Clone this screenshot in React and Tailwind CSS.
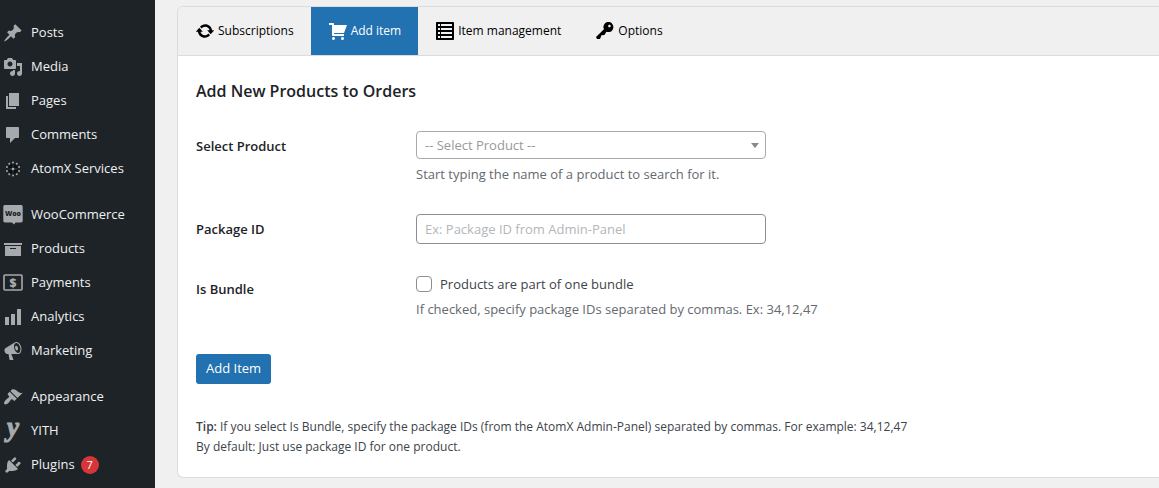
import React, { useState } from "react";

// WordPress dashicons, 20x20 grid
const icons = {
  post: "M10.44 3.02l1.82-1.82 6.36 6.35-1.83 1.82c-1.05-.68-2.48-.57-3.41.36l-.75.75c-.92.93-1.04 2.35-.35 3.41l-1.83 1.82-2.41-2.41-2.8 2.79c-.42.42-3.38 2.71-3.8 2.29s1.86-3.39 2.28-3.81l2.79-2.79L4.1 9.36l1.83-1.82c1.05.69 2.48.57 3.4-.36l.75-.75c.93-.92 1.05-2.35.36-3.41z",
  media: "M13 11V4c0-.55-.45-1-1-1h-1.67L9 1H5L3.67 3H2c-.55 0-1 .45-1 1v7c0 .55.45 1 1 1h10c.55 0 1-.45 1-1zM7 4.5c1.38 0 2.5 1.12 2.5 2.5S8.38 9.5 7 9.5 4.5 8.38 4.5 7 5.62 4.5 7 4.5zM14 6h5v10.5c0 1.38-1.12 2.5-2.5 2.5S14 17.88 14 16.5s1.12-2.5 2.5-2.5c.17 0 .34.02.5.05V9h-3V6zm-4 8.05V13h2v3.5c0 1.38-1.12 2.5-2.5 2.5S7 17.88 7 16.5 8.12 14 9.5 14c.17 0 .34.02.5.05z",
  page: "M6 15V2h10v13H6zm-1 1h8v2H3V5h2v11z",
  comments: "M4 2h11c.55 0 1 .45 1 1v9c0 .55-.45 1-1 1h-3l-5 5v-5H4c-.55 0-1-.45-1-1V3c0-.55.45-1 1-1z",
  archive: "M19 4v2H1V4h18zM2 7h16v10H2V7zm11 3V9H7v1h6z",
  chart: "M18 18V2h-4v16h4zm-6 0V7H8v11h4zm-6 0v-8H2v8h4z",
  megaphone: "M18.15 5.94c.46 1.62.38 3.22-.02 4.48-.42 1.28-1.26 2.18-2.3 2.48-.16.06-.26.06-.4.06-.06.02-.12.02-.18.02-.06.02-.14.02-.22.02h-6.8l2.22 5.5c.02.14-.06.26-.14.34-.08.1-.24.16-.34.16H6.95c-.1 0-.26-.06-.34-.16-.08-.08-.16-.2-.14-.34l-1-5.5H4.25l-.02-.02c-.5.06-1.08-.18-1.54-.62s-.88-1.08-1.06-1.88c-.24-.8-.2-1.56-.02-2.2.18-.62.58-1.08 1.06-1.3l.02-.02 9-5.4c.1-.06.18-.1.24-.16.06-.04.14-.08.24-.12.16-.08.28-.12.5-.18 1.04-.3 2.24.1 3.22.98s1.84 2.24 2.26 3.86zm-2.58 5.98h-.02c.4-.1.74-.34 1.04-.7.58-.7.86-1.76.86-3.04 0-.64-.1-1.3-.28-1.98-.34-1.36-1.02-2.5-1.78-3.24s-1.68-1.1-2.46-.88c-.82.22-1.4.96-1.7 2-.32 1.04-.28 2.36.06 3.72.38 1.36 1 2.5 1.8 3.24.78.74 1.62 1.1 2.48.88zm-2.54-7.08c.22-.04.42-.02.62.04.38.16.76.48 1.02 1s.42 1.2.42 1.78c0 .3-.04.56-.12.8-.18.48-.44.84-.86.94-.34.1-.8-.06-1.14-.4s-.64-.86-.78-1.5c-.18-.62-.12-1.24.02-1.72s.48-.84.82-.94z",
  appearance: "M14.48 11.06L7.41 3.99l1.5-1.5c.5-.56 2.3-.47 3.51.32 1.21.8 1.43 1.28 2.91 2.1 1.18.64 2.45 1.26 4.45.85zm-.71.71L6.7 4.7 4.93 6.47c-.39.39-.39 1.02 0 1.41l1.06 1.06c.39.39.39 1.03 0 1.42-.6.6-1.43 1.11-2.21 1.69-.35.26-.7.53-1.01.84C1.43 14.23.4 16.08 1.4 17.07c.99 1 2.84-.03 4.18-1.36.31-.31.58-.66.85-1.02.57-.78 1.08-1.61 1.69-2.21.39-.39 1.02-.39 1.41 0l1.06 1.06c.39.39 1.02.39 1.41 0z",
  plugins: "M13.11 4.36L9.87 7.6 8 5.73l3.24-3.24c.35-.34 1.05-.2 1.56.32.52.51.66 1.21.31 1.55zm-8 1.77l.91-1.12 9.01 9.01-1.19.84c-.71.71-2.63 1.16-3.82 1.16H6.14L4.9 17.26c-.59.59-1.54.59-2.12 0-.59-.58-.59-1.53 0-2.12l1.24-1.24v-3.88c0-1.13.4-3.19 1.09-3.89zm7.26 3.97l3.24-3.24c.34-.35 1.04-.21 1.55.31.52.51.66 1.21.31 1.55l-3.24 3.25z",
  update: "M10.2 3.28c3.53 0 6.43 2.61 6.92 6h2.08l-3.5 4-3.5-4h2.32c-.45-1.97-2.21-3.45-4.32-3.45-1.45 0-2.73.71-3.54 1.78L4.95 5.66C6.23 4.2 8.11 3.28 10.2 3.28zm-.4 13.44c-3.52 0-6.43-2.61-6.92-6H.8l3.5-4c1.17 1.33 2.33 2.67 3.5 4H5.48c.45 1.97 2.21 3.45 4.32 3.45 1.45 0 2.73-.71 3.54-1.78l1.71 1.95c-1.28 1.46-3.15 2.38-5.25 2.38z",
  cart: "M6 13h10v2H5c-.55 0-1-.45-1-1V4H1V2h4c.55 0 1 .45 1 1v1h13l-3 8H6v1zm-.5 3c.83 0 1.5.67 1.5 1.5S6.33 19 5.5 19 4 18.33 4 17.5 4.67 16 5.5 16zm9 0c.83 0 1.5.67 1.5 1.5s-.67 1.5-1.5 1.5-1.5-.67-1.5-1.5.67-1.5 1.5-1.5z",
  list: "M2 1h16c.55 0 1 .45 1 1v16c0 .55-.45 1-1 1H2c-.55 0-1-.45-1-1V2c0-.55.45-1 1-1zM3 3v2h2V3zM6 3v2h11V3zM3 7v2h2V7zM6 7v2h11V7zM3 11v2h2v-2zM6 11v2h11v-2zM3 15v2h2v-2zM6 15v2h11v-2z",
  key: "M16.95 2.58c1.96 1.95 1.96 5.12 0 7.07-1.51 1.51-3.75 1.84-5.59 1.01l-1.87 3.31-2.99.31L5 18H2l-1-2 7.95-7.69c-.92-1.87-.62-4.18.93-5.73 1.95-1.96 5.12-1.96 7.07 0zm-2.51 3.79c.74 0 1.33-.6 1.33-1.34 0-.73-.59-1.33-1.33-1.33-.73 0-1.33.6-1.33 1.33 0 .74.6 1.34 1.33 1.34z",
};

function Dashicon({ name }) {
  return (
    <svg viewBox="0 0 20 20" className="w-5 h-5 shrink-0" fill="currentColor" aria-hidden="true">
      <path fillRule="evenodd" d={icons[name]} />
    </svg>
  );
}

function AtomIcon() {
  const dots = Array.from({ length: 10 }, (_, i) => (i * Math.PI) / 5);
  return (
    <svg viewBox="0 0 20 20" className="w-5 h-5 shrink-0" fill="currentColor" aria-hidden="true">
      <circle cx="10" cy="10" r="5" fill="#0c0f12" />
      {dots.map((a) => (
        <circle key={a} cx={10 + 6.4 * Math.sin(a)} cy={10 - 6.4 * Math.cos(a)} r="1" />
      ))}
      <circle cx="10" cy="10" r="1.3" />
      <path d="M9.6 5.5h.8v9h-.8zM5.5 9.6h9v.8h-9z" opacity=".35" />
    </svg>
  );
}

function WooIcon() {
  return (
    <svg viewBox="0 0 20 20" className="w-5 h-5 shrink-0" aria-hidden="true">
      <path fill="currentColor" d="M2 0h16c1 0 1.7.7 1.7 1.7v14c0 1-.7 1.7-1.7 1.7h-5.500L11 19.500l-2-2.100H2c-1 0-1.700-.7-1.700-1.700v-14C.3.7 1 0 2 0z" />
      <text x="10" y="11" textAnchor="middle" fontSize="7" fontWeight="800" fontFamily="Open Sans, sans-serif" fill="#1d2327">
        Woo
      </text>
    </svg>
  );
}

function PaymentsIcon() {
  return (
    <svg viewBox="0 0 20 20" className="w-5 h-5 shrink-0" aria-hidden="true">
      <rect x="1" y="2" width="18" height="15" rx="1" fill="none" stroke="currentColor" strokeWidth="1.6" />
      <text x="10" y="14" textAnchor="middle" fontSize="12" fontWeight="800" fontFamily="Open Sans, sans-serif" fill="currentColor">
        $
      </text>
    </svg>
  );
}

function YithIcon() {
  return (
    <svg viewBox="0 0 20 20" className="w-5 h-5 shrink-0 overflow-visible" aria-hidden="true">
      <text
        x="10"
        y="15"
        textAnchor="middle"
        fontSize="27"
        fontWeight="700"
        fontStyle="italic"
        fontFamily="Liberation Serif, serif"
        fill="currentColor"
        stroke="currentColor"
        strokeWidth="1"
      >
        y
      </text>
    </svg>
  );
}

const menu = [
  [
    { label: "Posts", icon: <Dashicon name="post" /> },
    { label: "Media", icon: <Dashicon name="media" /> },
    { label: "Pages", icon: <Dashicon name="page" /> },
    { label: "Comments", icon: <Dashicon name="comments" /> },
    { label: "AtomX Services", icon: <AtomIcon /> },
  ],
  [
    { label: "WooCommerce", icon: <WooIcon /> },
    { label: "Products", icon: <Dashicon name="archive" /> },
    { label: "Payments", icon: <PaymentsIcon /> },
    { label: "Analytics", icon: <Dashicon name="chart" /> },
    { label: "Marketing", icon: <Dashicon name="megaphone" /> },
  ],
  [
    { label: "Appearance", icon: <Dashicon name="appearance" /> },
    { label: "YITH", icon: <YithIcon /> },
    { label: "Plugins", icon: <Dashicon name="plugins" />, count: 7 },
  ],
];

const tabs = [
  { id: "subscriptions", label: "Subscriptions", icon: "update" },
  { id: "add", label: "Add item", icon: "cart" },
  { id: "manage", label: "Item management", icon: "list" },
  { id: "options", label: "Options", icon: "key" },
];

function Sidebar() {
  return (
    <nav className="w-[155px] shrink-0 bg-[#1d2327] pt-4 flex flex-col gap-3">
      {menu.map((group, idx) => (
        <ul key={idx}>
          {group.map((item) => (
            <li key={item.label}>
              <a href="#" className="flex items-center h-[34px] pl-[3px] text-[#a7aaad]">
                {item.icon}
                <span className="ml-2 text-[13px] text-[#f0f0f1] whitespace-nowrap">{item.label}</span>
                {item.count && (
                  <span className="ml-1.5 w-[18px] h-[18px] rounded-full bg-[#d63638] text-white text-[11px] flex items-center justify-center">
                    {item.count}
                  </span>
                )}
              </a>
            </li>
          ))}
        </ul>
      ))}
    </nav>
  );
}

function App() {
  const [tab, setTab] = useState("add");
  const [product, setProduct] = useState("");
  const [packageId, setPackageId] = useState("");
  const [isBundle, setIsBundle] = useState(false);

  return (
    <div className="min-h-screen flex bg-[#f0f0f1] font-['Open_Sans',sans-serif] text-[13px] text-[#3c434a]">
      <Sidebar />

      <main className="flex-1 min-w-0 pl-[22px] pt-1.5 pb-[11px]">
        <div className="h-full bg-white border border-r-0 border-[#dcdcde] rounded-l-md overflow-hidden">
          <div className="flex h-[49px] bg-[#f0f0f0] border-b border-[#dcdcde]">
            {tabs.map((t) => (
              <button
                key={t.id}
                type="button"
                onClick={() => setTab(t.id)}
                className={`flex items-center gap-[3px] px-[17px] text-xs whitespace-nowrap ${
                  tab === t.id ? "bg-[#2271b1] text-white" : "text-black"
                }`}
              >
                <Dashicon name={t.icon} />
                {t.label}
              </button>
            ))}
          </div>

          <form className="px-[18px] pt-[23px]" onSubmit={(e) => e.preventDefault()}>
            <h2 className="text-base leading-6 font-semibold text-[#1d2327]">Add New Products to Orders</h2>

            <div className="mt-7 grid grid-cols-[220px_1fr]">
              <label htmlFor="product" className="pt-[5px] leading-5 font-semibold text-[#1d2327]">
                Select Product
              </label>
              <div>
                <div className="relative w-[350px]">
                  <select
                    id="product"
                    value={product}
                    onChange={(e) => setProduct(e.target.value)}
                    className="block appearance-none w-full h-7 pt-0.5 pl-2 pr-6 bg-white border border-[#aaa] rounded text-[#999]"
                  >
                    <option value="">-- Select Product --</option>
                  </select>
                  <svg viewBox="0 0 8 5" className="absolute right-[7px] top-3 w-2 h-[5px] pointer-events-none" fill="#888">
                    <path d="M0 0h8L4 5z" />
                  </svg>
                </div>
                <p className="mt-[5px] leading-5 text-[#646970]">Start typing the name of a product to search for it.</p>
              </div>
            </div>

            <div className="mt-[30px] grid grid-cols-[220px_1fr]">
              <label htmlFor="package" className="pt-[5px] leading-5 font-semibold text-[#1d2327]">
                Package ID
              </label>
              <input
                id="package"
                type="text"
                value={packageId}
                onChange={(e) => setPackageId(e.target.value)}
                placeholder="Ex: Package ID from Admin-Panel"
                className="w-[350px] h-[30px] px-2 border border-[#8c8f94] rounded placeholder:text-[#b4b6b9]"
              />
            </div>

            <div className="mt-[30px] grid grid-cols-[220px_1fr]">
              <span className="pt-[5px] leading-5 font-semibold text-[#1d2327]">Is Bundle</span>
              <div>
                <label className="flex items-center gap-2 leading-5">
                  <input
                    type="checkbox"
                    checked={isBundle}
                    onChange={(e) => setIsBundle(e.target.checked)}
                    className="appearance-none w-4 h-4 bg-white border border-[#8c8f94] rounded checked:bg-[#2271b1]"
                  />
                  Products are part of one bundle
                </label>
                <p className="mt-[5px] leading-5 text-[#646970]">
                  If checked, specify package IDs separated by commas. Ex: 34,12,47
                </p>
              </div>
            </div>

            <button type="submit" className="mt-[35px] h-[30px] px-2.5 rounded-[3px] bg-[#2271b1] text-white">
              Add Item
            </button>

            <p className="mt-[33px] pb-5 text-xs leading-5">
              <strong className="font-semibold">Tip:</strong> If you select Is Bundle, specify the package IDs (from the
              AtomX Admin-Panel) separated by commas. For example: 34,12,47
              <br />
              By default: Just use package ID for one product.
            </p>
          </form>
        </div>
      </main>
    </div>
  );
}

export default App;
